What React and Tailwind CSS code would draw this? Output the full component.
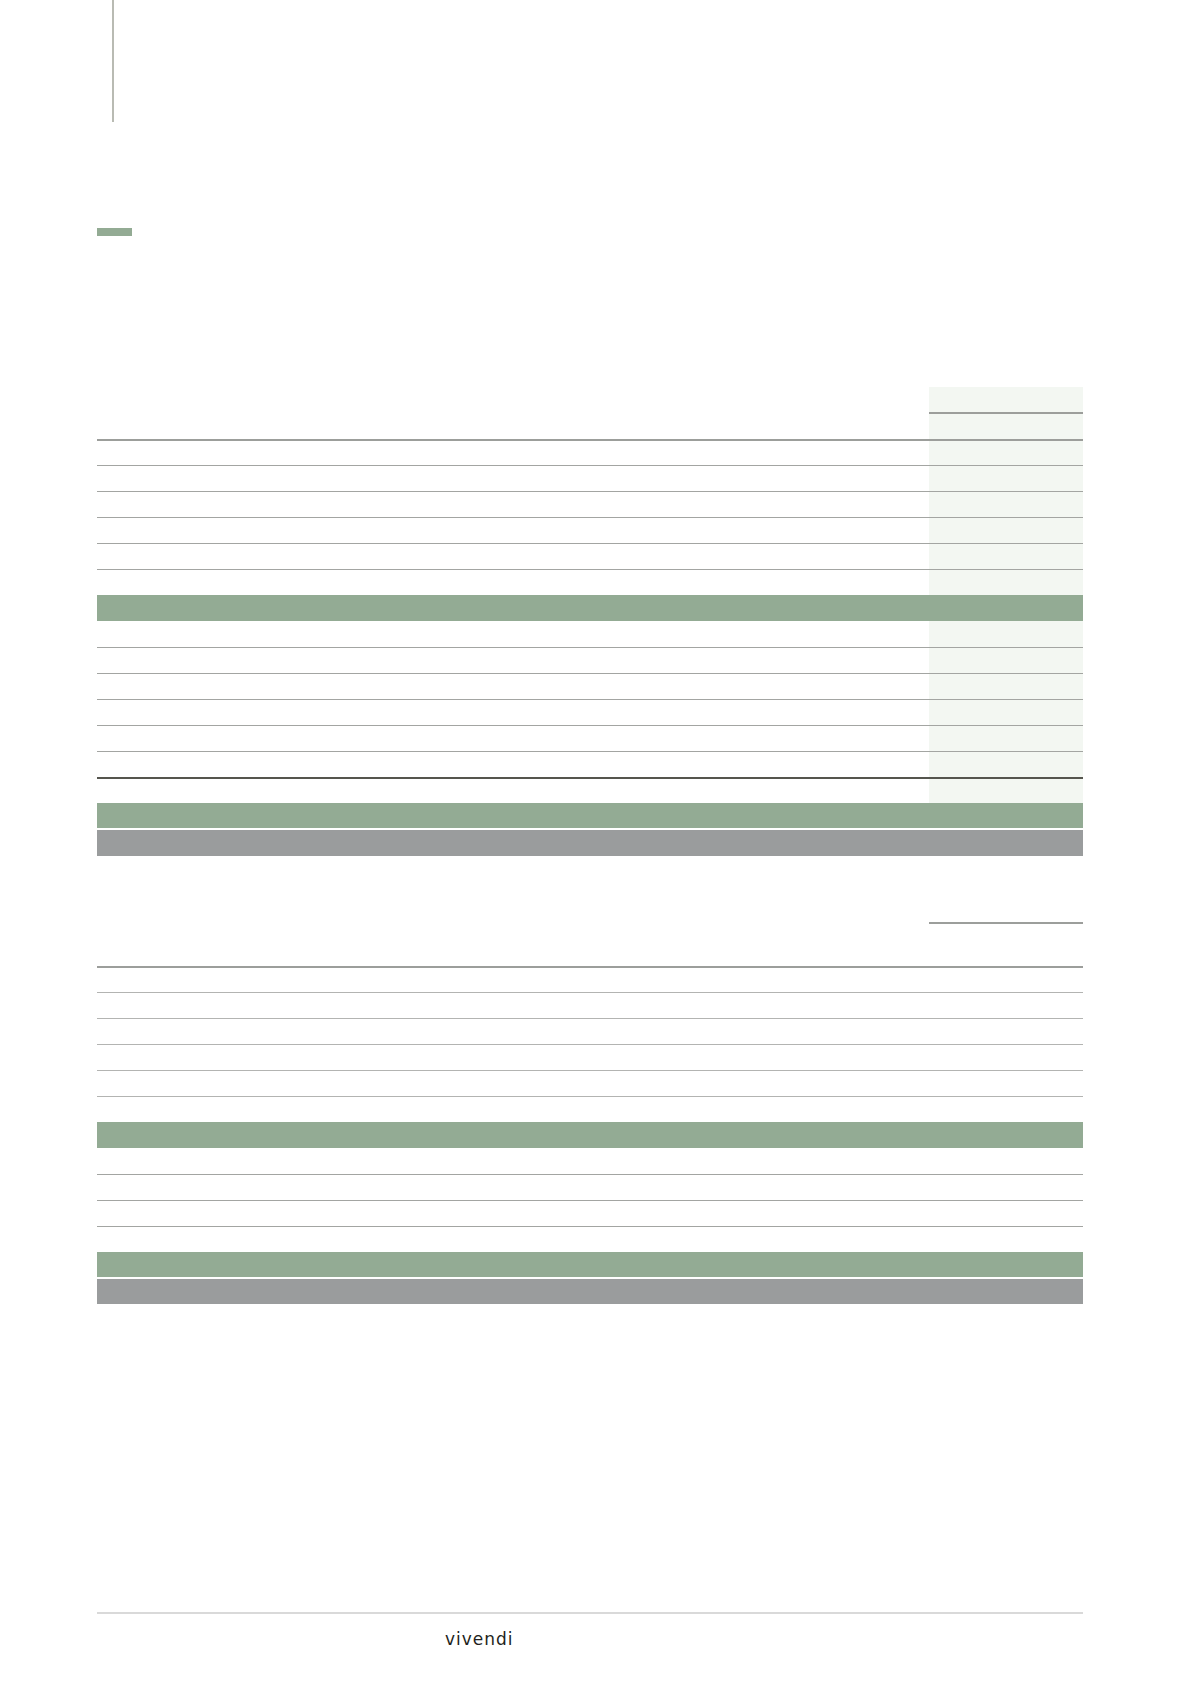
import React from 'react';

// Colours taken from the page
const GREEN = 'bg-[#93ab94]';
const GREY = 'bg-[#9a9c9d]';

// One table row: left part + right (highlighted) column
function Row({ h = 'h-[26px]', line = '', colLine = '', shaded = false }) {
    return (
        <div className={`flex ${h} ${line}`}>
            <div className="flex-1" />
            <div className={`w-[154px] ${shaded ? 'bg-[#f3f7f2]' : ''} ${colLine}`} />
        </div>
    );
}

function Bar({ color, h = 'h-[26px]' }) {
    return <div className={`${h} ${color}`} />;
}

export default function App() {
    const thin1 = 'border-t border-[#a3a5a2]';
    const thin2 = 'border-t border-[#b3b4b2]';

    return (
        <div className="w-[1196px] min-h-[1692px] bg-white" style={{ fontFamily: '"DejaVu Sans", sans-serif' }}>
            {/* vertical rule at the top */}
            <div className="ml-[112px] w-[2px] h-[122px] bg-[#b9bbb3]" />

            {/* small green mark */}
            <div className="mt-[106px] ml-[97px] w-[35px] h-[8px] bg-[#93ab94]" />

            <div className="ml-[97px] w-[986px]">
                {/* ✅ Table 1 */}
                <div className="mt-[151px]">
                    <Row h="h-[25px]" shaded />
                    <Row h="h-[27px]" shaded colLine="border-t-2 border-[#9c9e9b]" />
                    <Row line="border-t-2 border-[#9c9e9b]" shaded />
                    <Row line={thin1} shaded />
                    <Row line={thin1} shaded />
                    <Row line={thin1} shaded />
                    <Row line={thin1} shaded />
                    <Row line={thin1} shaded />
                    <Bar color={GREEN} />
                    <Row shaded />
                    <Row line={thin1} shaded />
                    <Row line={thin1} shaded />
                    <Row line={thin1} shaded />
                    <Row line={thin1} shaded />
                    <Row line={thin1} shaded />
                    <Row line="border-t-2 border-[#55554e]" shaded />
                    <Bar color={GREEN} h="h-[25px]" />
                    <div className="h-[2px]" />
                    <Bar color={GREY} />
                </div>

                {/* ✅ Table 2 */}
                <div className="mt-[66px]">
                    <Row h="h-[44px]" colLine="border-t-2 border-[#9c9e9b]" />
                    <Row line="border-t-2 border-[#9c9e9b]" />
                    <Row line={thin2} />
                    <Row line={thin2} />
                    <Row line={thin2} />
                    <Row line={thin2} />
                    <Row line={thin2} />
                    <Bar color={GREEN} />
                    <Row />
                    <Row line={thin1} />
                    <Row line={thin1} />
                    <Row line={thin1} />
                    <Bar color={GREEN} h="h-[25px]" />
                    <div className="h-[2px]" />
                    <Bar color={GREY} h="h-[25px]" />
                </div>

                {/* footer */}
                <div className="mt-[308px] h-[2px] bg-[#d9d9d9]" />
                <div className="mt-[15px] ml-[348px] text-[17px] leading-[20px] tracking-[1px] font-medium text-[#231f20]">
                    vivendi
                </div>
            </div>
        </div>
    );
}
